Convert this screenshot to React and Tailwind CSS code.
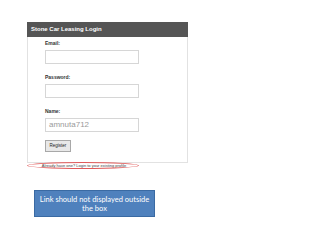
export default function App() {
  return (
    <div className="w-[320px] h-[240px] bg-white overflow-hidden" style={{ fontFamily: '"Liberation Sans", Arial, sans-serif' }}>
      <div className="pt-[22px] pl-[27px]">
        <div className="w-[161px]">
          <div className="h-[15px] bg-[#555555] flex items-center pl-[4px] text-white text-[6px] font-bold">
            Stone Car Leasing Login
          </div>
          <div className="border-x border-b border-[#e2e2e2] pl-[17px] pb-[5px] h-[126px]">
            <div className="pt-[3px] text-[5px] font-bold text-[#333] leading-[7px]">Email:</div>
            <div className="mt-[3px] w-[94px] h-[14px] border border-[#d6d6d6]"></div>
            <div className="mt-[10px] text-[5px] font-bold text-[#333] leading-[7px]">Password:</div>
            <div className="mt-[3px] w-[94px] h-[14px] border border-[#d6d6d6]"></div>
            <div className="mt-[10px] text-[5px] font-bold text-[#333] leading-[7px]">Name:</div>
            <div className="mt-[3px] w-[94px] h-[14px] border border-[#d6d6d6] flex items-center pl-[3px] text-[8px] text-[#9a9a9a]">
              amnuta712
            </div>
            <div className="mt-[8px] w-[26px] h-[12px] border border-[#a8a8a8] bg-[#e8e8e8] flex items-center justify-center text-[4.5px] text-[#222]">
              Register
            </div>
          </div>
          <div className="relative -mt-[1px] h-[7px] w-[114px] flex items-center justify-center">
            <span className="text-[4px] text-[#444] whitespace-nowrap">Already have one? Login to your existing profile</span>
            <div className="absolute left-0 top-0 w-[112px] h-[7px] rounded-[50%] border border-[#e05a5a]"></div>
          </div>
        </div>
        <div className="mt-[21px] ml-[7px] w-[121px] h-[27px] bg-[#4f81bd] border border-[#3a6aa3] flex flex-col items-center justify-center text-white text-[7.5px] leading-[9px] whitespace-nowrap" style={{ fontFamily: 'Lato, sans-serif' }}>
          <div>Link should not displayed outside</div>
          <div>the box</div>
        </div>
      </div>
    </div>
  );
}
